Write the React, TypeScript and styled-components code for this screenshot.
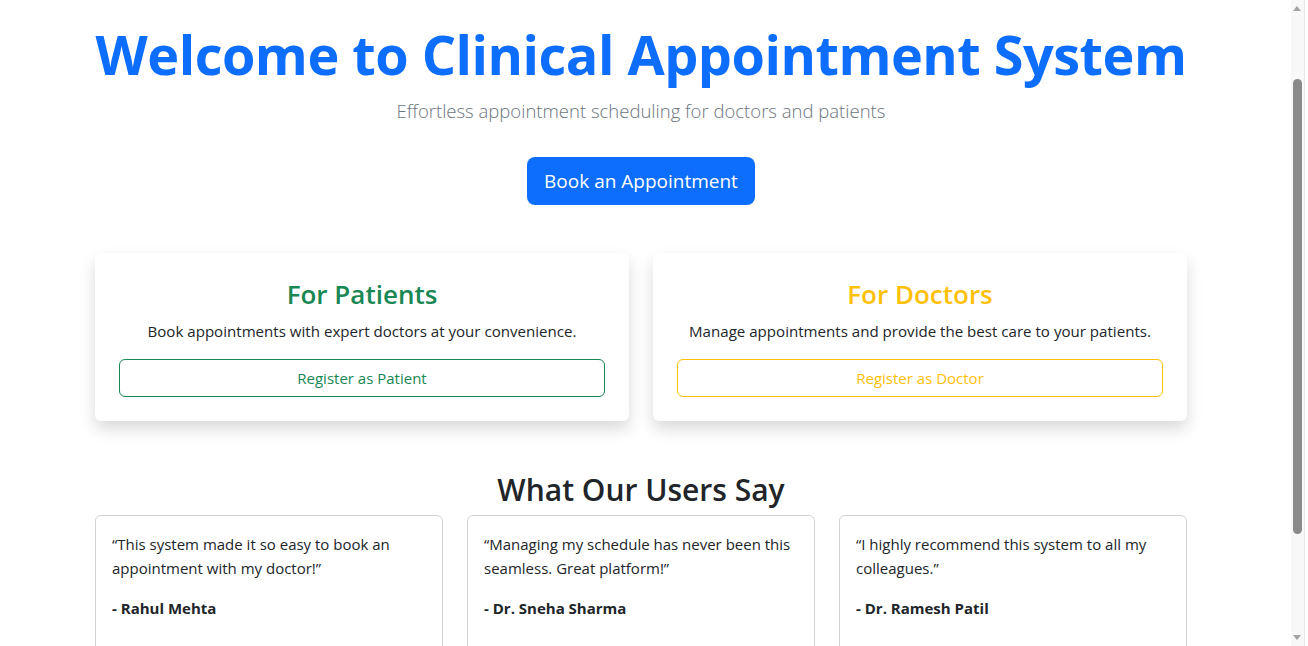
import React from "react";
import styled, { createGlobalStyle } from "styled-components";

const Global = createGlobalStyle`
  html, body { margin: 0; padding: 0; background: #fff; }
  body {
    font-family: "Open Sans", "Noto Sans", sans-serif;
    color: #212529;
    font-size: 15px;
    line-height: 1.5;
  }
  * { box-sizing: border-box; }
`;

const Page = styled.div`
  padding: 21px 0 40px 95px;
`;

const Container = styled.main`
  width: 1092px;
  display: flex;
  flex-direction: column;
  align-items: stretch;
`;

const Hero = styled.header`
  display: flex;
  flex-direction: column;
  align-items: center;
  text-align: center;
`;

const Title = styled.h1`
  margin: 0 0 8px;
  font-size: 54px;
  letter-spacing: -0.5px;
  line-height: 67px;
  font-weight: 700;
  color: #0d6efd;
  white-space: nowrap;
`;

const Lead = styled.p`
  margin: 0 0 31px;
  font-size: 18.5px;
  line-height: 30px;
  font-weight: 300;
  color: #6c757d;
`;

const PrimaryButton = styled.button`
  font-family: inherit;
  font-size: 19px;
  line-height: 30px;
  padding: 9px 17px;
  border: none;
  border-radius: 8px;
  background: #0d6efd;
  color: #fff;
  cursor: pointer;
`;

const RoleGrid = styled.section`
  display: grid;
  grid-template-columns: 1fr 1fr;
  gap: 24px;
  margin-top: 48px;
`;

const RoleCard = styled.div`
  background: #fff;
  border-radius: 6px;
  box-shadow: 0 8px 16px rgba(0, 0, 0, 0.15);
  padding: 24px;
  display: flex;
  flex-direction: column;
  align-items: center;
  text-align: center;
`;

const RoleTitle = styled.h3<{ $color: string }>`
  margin: 0 0 8px;
  font-size: 26px;
  line-height: 34px;
  font-weight: 600;
  color: ${(p) => p.$color};
`;

const RoleText = styled.p`
  margin: 0 0 16px;
  font-size: 15.1px;
  line-height: 24px;
`;

const OutlineButton = styled.button<{ $color: string }>`
  width: 100%;
  font-family: inherit;
  font-size: 15px;
  line-height: 24px;
  padding: 6px 12px;
  background: transparent;
  border: 1px solid ${(p) => p.$color};
  color: ${(p) => p.$color};
  border-radius: 6px;
  cursor: pointer;
`;

const SectionTitle = styled.h2`
  margin: 50px 0 6px;
  text-align: center;
  font-size: 30px;
  line-height: 38px;
  font-weight: 600;
  color: #212529;
`;

const TestimonialGrid = styled.section`
  display: grid;
  grid-template-columns: repeat(3, 1fr);
  gap: 24px;
`;

const TestimonialCard = styled.div`
  border: 1px solid rgba(0, 0, 0, 0.175);
  border-radius: 6px;
  padding: 16px 16px 40px;
`;

const Quote = styled.p`
  margin: 0 0 16px;
  font-size: 15px;
  line-height: 24px;
`;

const Author = styled.p`
  margin: 0;
  font-weight: 700;
  font-size: 15px;
  line-height: 24px;
`;

/* Browser scrollbar drawn over the right edge of the window */
const ScrollTrack = styled.div`
  position: fixed;
  top: 0;
  right: 0;
  width: 17px;
  height: 100vh;
  background: #f8f8f8;
  border-right: 3px solid #fff;
  box-shadow: inset -1px 0 0 #e6e6e6;
  display: flex;
  flex-direction: column;
  align-items: center;
  padding-right: 2px;
`;

const ScrollArrow = styled.svg`
  flex: none;
  margin: 6px 0;
`;

const ScrollSpace = styled.div`
  flex: 1;
  width: 100%;
  display: flex;
  flex-direction: column;
  align-items: center;
  padding-top: 62px;
  padding-bottom: 95px;
`;

const ScrollThumb = styled.div`
  width: 9px;
  flex: 1;
  border-radius: 5px;
  background: #8a8a8a;
`;

const testimonials = [
  { quote: "“This system made it so easy to book an appointment with my doctor!”", author: "- Rahul Mehta" },
  { quote: "“Managing my schedule has never been this seamless. Great platform!”", author: "- Dr. Sneha Sharma" },
  { quote: "“I highly recommend this system to all my colleagues.”", author: "- Dr. Ramesh Patil" },
];

export default function App() {
  return (
    <>
      <Global />
      <Page>
        <Container>
          <Hero>
            <Title>Welcome to Clinical Appointment System</Title>
            <Lead>Effortless appointment scheduling for doctors and patients</Lead>
            <PrimaryButton>Book an Appointment</PrimaryButton>
          </Hero>
          <RoleGrid>
            <RoleCard>
              <RoleTitle $color="#198754">For Patients</RoleTitle>
              <RoleText>Book appointments with expert doctors at your convenience.</RoleText>
              <OutlineButton $color="#198754">Register as Patient</OutlineButton>
            </RoleCard>
            <RoleCard>
              <RoleTitle $color="#ffc107">For Doctors</RoleTitle>
              <RoleText>Manage appointments and provide the best care to your patients.</RoleText>
              <OutlineButton $color="#ffc107">Register as Doctor</OutlineButton>
            </RoleCard>
          </RoleGrid>
          <SectionTitle>What Our Users Say</SectionTitle>
          <TestimonialGrid>
            {testimonials.map((t) => (
              <TestimonialCard key={t.author}>
                <Quote>{t.quote}</Quote>
                <Author>{t.author}</Author>
              </TestimonialCard>
            ))}
          </TestimonialGrid>
        </Container>
      </Page>
      <ScrollTrack aria-hidden="true">
        <ScrollArrow width="8" height="5" viewBox="0 0 8 5">
          <path d="M0 5 L4 0 L8 5 Z" fill="#a3a3a3" />
        </ScrollArrow>
        <ScrollSpace>
          <ScrollThumb />
        </ScrollSpace>
        <ScrollArrow width="8" height="5" viewBox="0 0 8 5">
          <path d="M0 0 L4 5 L8 0 Z" fill="#a3a3a3" />
        </ScrollArrow>
      </ScrollTrack>
    </>
  );
}
